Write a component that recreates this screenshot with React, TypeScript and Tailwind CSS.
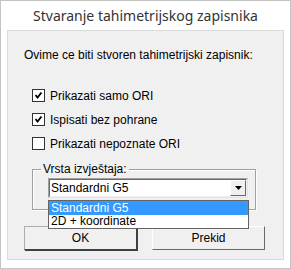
import { useState } from "react";

const font = { fontFamily: '"Liberation Sans", Arial, sans-serif' };

function CheckBox({ checked, label }: { checked: boolean; label: string }) {
  return (
    <div className="flex h-[13px] items-center">
      <div className="flex size-[13px] items-center justify-center border border-[#333] bg-white">
        {checked && (
          <svg width="9" height="9" viewBox="0 0 9 9">
            <path d="M1.5 4 L3.5 6.5 L7.5 1.5" fill="none" stroke="#000" strokeWidth="1.8" />
          </svg>
        )}
      </div>
      <span className="ml-[5px] text-[12px] leading-none text-black">{label}</span>
    </div>
  );
}

export default function App() {
  const [items] = useState([
    { label: "Prikazati samo ORI", checked: true },
    { label: "Ispisati bez pohrane", checked: true },
    { label: "Prikazati nepoznate ORI", checked: false },
  ]);

  return (
    <div
      className="flex h-[269px] w-[291px] flex-col border border-[#c4c4c4] bg-white"
      style={font}
    >
      <div
        className="flex h-[29px] items-center justify-center text-[14px] text-[#333]"
        style={{ fontFamily: '"Noto Sans", "Open Sans", sans-serif' }}
      >
        Stvaranje tahimetrijskog zapisnika
      </div>

      <div className="relative mx-[6px] flex h-[230px] flex-col border border-[#dadada] bg-[#f0f0f0] pt-[17px]">
        <p className="ml-[16px] text-[12px] leading-[15px] text-black">
          Ovime ce biti stvoren tahimetrijski zapisnik:
        </p>

        <div className="ml-[24px] mt-[26px] flex flex-col gap-[11px]">
          {items.map((it) => (
            <CheckBox key={it.label} checked={it.checked} label={it.label} />
          ))}
        </div>

        <fieldset className="ml-[24px] mt-[13px] h-[47px] w-[224px] border border-[#a0a0a0] shadow-[inset_1px_1px_0_#fff,1px_1px_0_#fff]">
          <legend className="ml-[8px] px-[2px] text-[12px] leading-[13px] text-black">
            Vrsta izvještaja:
          </legend>
          <div className="ml-[15px] mt-[2px] flex h-[20px] w-[200px] items-center border border-t-[#a0a0a0] border-l-[#a0a0a0] border-r-[#e3e3e3] border-b-[#e3e3e3] bg-white">
            <div className="flex h-full flex-1 items-center border border-t-[#696969] border-l-[#696969] border-r-[#f0f0f0] border-b-[#f0f0f0]">
              <span className="ml-[1px] flex-1 text-[12px] text-black">Standardni G5</span>
              <div className="flex h-[16px] w-[16px] items-center justify-center border border-t-[#fff] border-l-[#fff] border-r-[#696969] border-b-[#696969] bg-[#f0f0f0]">
                <svg width="7" height="4" viewBox="0 0 7 4">
                  <path d="M0 0 H7 L3.5 4 Z" fill="#000" />
                </svg>
              </div>
            </div>
          </div>
        </fieldset>

        <div className="ml-[16px] mt-[16px] flex gap-[15px]">
          <button className="h-[24px] w-[113px] border border-t-[#adadad] border-l-[#adadad] border-r-[#404040] border-b-[#404040] bg-[#f0f0f0] text-[12px] text-black shadow-[1px_1px_0_#404040]">
            OK
          </button>
          <button className="h-[24px] w-[113px] border border-t-[#fff] border-l-[#fff] border-r-[#696969] border-b-[#696969] bg-[#f0f0f0] text-[12px] text-black">
            Prekid
          </button>
        </div>

        <div className="absolute left-[40px] top-[169px] w-[201px] border border-[#646464] bg-white text-[12px]">
          <div className="border border-dotted border-[#c08040] bg-[#3399ff] pl-[1px] leading-[12px] text-white">
            Standardni G5
          </div>
          <div className="px-[2px] leading-[13px] text-black">2D + koordinate</div>
        </div>
      </div>
    </div>
  );
}
